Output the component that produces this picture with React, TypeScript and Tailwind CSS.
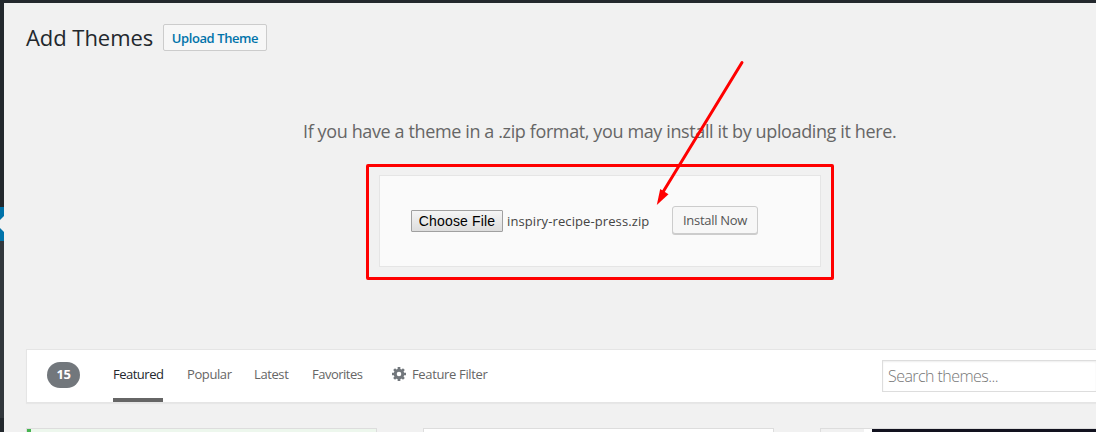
const tabs = [
  { label: "Featured", cls: "w-[50px] text-[#23282d] border-[#666] tracking-[-0.5px]" },
  { label: "Popular", cls: "w-[44px] ml-[24px] text-[#666] border-transparent tracking-[-0.4px]" },
  { label: "Latest", cls: "w-[34px] ml-[23px] text-[#666] border-transparent tracking-[-0.4px]" },
  { label: "Favorites", cls: "w-[51px] ml-[24px] text-[#666] border-transparent tracking-[-0.5px]" },
];

function AdminMenuEdge() {
  return (
    <aside className="flex w-1 shrink-0 flex-col bg-[#23282d]">
      <div className="h-[204px]" />
      <svg className="block h-[34px] w-1" viewBox="0 0 4 34">
        <rect width="4" height="34" fill="#0073aa" />
        <path d="M4 9L0 13V21L4 25Z" fill="#f1f1f1" />
      </svg>
      <div className="h-[177px] bg-[#32373c]" />
    </aside>
  );
}

function Gear() {
  return (
    <svg className="block h-[14px] w-[14px]" viewBox="0 0 14 14">
      <g stroke="#72777c" strokeWidth="2.7">
        <path d="M7 0V14M0 7H14M2.1 2.1L11.9 11.9M11.9 2.1L2.1 11.9" />
      </g>
      <circle cx="7" cy="7" r="3.8" fill="#fff" stroke="#72777c" strokeWidth="3" />
    </svg>
  );
}

function UploadPanel() {
  return (
    <section className="ml-[362px] mt-[17px] h-[116px] w-[468px] rounded-[2px] border-[3px] border-[#ff0000] px-[10px] py-[8px]">
      <form className="flex h-[92px] w-[442px] items-start border border-[#e5e5e5] bg-[#fafafa] pl-[31px] pt-[30px]">
        <button type="button" className="mt-[4px] h-[22px] w-[92px] whitespace-nowrap rounded-[1px] border border-[#a0a0a0] bg-linear-to-b from-[#f5f5f5] to-[#dddddd] font-['Liberation_Sans',sans-serif] text-[14px] leading-[20px] tracking-[0.15px] text-black">
          Choose File
        </button>
        <span className="ml-[4px] mt-[5px] w-[165px] whitespace-nowrap text-[13px] leading-[20px] tracking-[0.1px] text-[#444]">
          inspiry-recipe-press.zip
        </span>
        <button type="button" className="h-[28px] w-[86px] whitespace-nowrap rounded-[3px] border border-[#ccc] bg-[#f7f7f7] text-[13px] leading-[26px] tracking-[-0.3px] text-[#555] shadow-[0_1px_0_#ccc]">
          Install Now
        </button>
      </form>
    </section>
  );
}

function FilterBar() {
  return (
    <nav className="ml-[22px] mt-[69px] flex h-[54px] shrink-0 items-start border border-r-0 border-[#e5e5e5] bg-white pl-[20px] text-[13px] shadow-[0_1px_1px_rgba(0,0,0,0.04)]">
      <span className="mt-[12px] flex h-[26px] w-[33px] items-center justify-center rounded-full bg-[#72777c] pb-px text-[13px] font-bold tracking-[-0.5px] text-white">15</span>
      <div className="ml-[33px] flex">
        {tabs.map((t) => (
          <a key={t.label} className={`h-[52px] whitespace-nowrap border-b-4 pt-[14px] leading-[20px] ${t.cls}`}>
            {t.label}
          </a>
        ))}
      </div>
      <div className="ml-[29px] mt-[17px]"><Gear /></div>
      <span className="ml-[6px] mt-[14px] whitespace-nowrap leading-[20px] tracking-[-0.35px] text-[#666]">Feature Filter</span>
      <div className="ml-auto mt-[10px] h-[32px] w-[214px] border border-r-0 border-[#ddd] bg-white pl-[5px] text-[16px] font-light leading-[31px] tracking-[-0.55px] text-[#777] shadow-[inset_0_1px_2px_rgba(0,0,0,0.07)]">
        Search themes...
      </div>
    </nav>
  );
}

function ThemeCards() {
  return (
    <div className="ml-[22px] mt-[25px] flex h-[4px] shrink-0 overflow-hidden">
      <div className="flex w-[351px] shrink-0 border border-b-0 border-[#ddd] bg-[#edf7ed]">
        <div className="w-1 bg-[#46b450]" />
      </div>
      <div className="ml-[46px] w-[351px] shrink-0 border border-b-0 border-[#ddd] bg-white" />
      <div className="ml-[46px] flex flex-1 border-l border-t border-[#ddd] bg-white">
        <div className="w-[43px] bg-[#f1f1f1]" />
        <div className="ml-[8px] flex-1 bg-[#12121f]" />
      </div>
    </div>
  );
}

export default function App() {
  return (
    <div className="relative flex h-[432px] w-[1096px] flex-col overflow-hidden bg-[#f1f1f1] font-['Open_Sans','Noto_Sans',sans-serif]">
      <div className="h-[3px] shrink-0 bg-[#23282d]" />
      <div className="flex flex-1">
        <AdminMenuEdge />
        <main className="flex flex-1 flex-col">
          <header className="flex h-[48px] shrink-0 items-start pl-[22px] pt-[21px]">
            <h1 className="w-[137px] whitespace-nowrap text-[22px] leading-[27px] tracking-[-0.05px] text-[#23282d]">Add Themes</h1>
            <button type="button" className="h-[27px] w-[104px] whitespace-nowrap rounded-[2px] border border-[#ccc] bg-[#f7f7f7] text-[13px] font-semibold leading-[26px] tracking-[-0.42px] text-[#0073aa]">
              Upload Theme
            </button>
          </header>
          <p className="ml-[299px] mt-[68px] h-[28px] shrink-0 whitespace-nowrap text-[18px] leading-[25px] tracking-[-0.38px] text-[#666]">
            If you have a theme in a .zip format, you may install it by uploading it here.
          </p>
          <UploadPanel />
          <FilterBar />
          <ThemeCards />
        </main>
      </div>
      <svg className="pointer-events-none absolute left-[650px] top-[56px]" width="100" height="156" viewBox="0 0 100 156">
        <path d="M92 6.5L13 136" stroke="#f00" strokeWidth="3" strokeLinecap="round" />
        <path d="M6.8 149L10.2 133L18.5 138.3Z" fill="#f00" />
      </svg>
    </div>
  );
}
